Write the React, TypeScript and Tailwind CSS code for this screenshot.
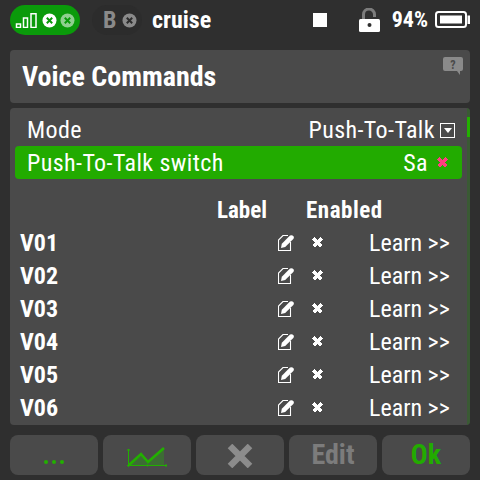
import React from "react";

const rows = ["V01", "V02", "V03", "V04", "V05", "V06"];

function XCircle({ className, mark }: { className: string; mark: string }) {
  return (
    <svg width="15" height="15" viewBox="0 0 15 15" className={className}>
      <circle cx="7.5" cy="7.5" r="7" fill="currentColor" />
      <path d="M4.8 4.8l5.4 5.4M10.2 4.8l-5.4 5.4" stroke={mark} strokeWidth="2" />
    </svg>
  );
}

function Signal() {
  return (
    <svg width="24" height="15" viewBox="0 0 24 15" fill="none" stroke="#fff" strokeWidth="1.5">
      <rect x="1.5" y="11" width="4" height="3.5" />
      <rect x="8.5" y="5" width="4" height="9.5" />
      <rect x="16" y="0.75" width="5" height="13.75" />
    </svg>
  );
}

function Lock() {
  return (
    <svg width="21" height="24" viewBox="0 0 21 24">
      <path d="M4.5 11V6.5a5.5 5.5 0 0 1 11 0V9" fill="none" stroke="#7c7c7c" strokeWidth="3" />
      <rect x="0" y="11" width="21" height="13" rx="1.5" fill="#fff" />
      <circle cx="10.5" cy="17" r="2" fill="#2f2f2f" />
    </svg>
  );
}

function Battery() {
  return (
    <svg width="35" height="18" viewBox="0 0 35 18">
      <rect x="1" y="1" width="30" height="15" rx="2.5" fill="none" stroke="#fff" strokeWidth="2" />
      <rect x="5" y="4.5" width="22" height="8" fill="#fff" />
      <rect x="32.5" y="4.5" width="2.5" height="8.5" fill="#fff" />
    </svg>
  );
}

function Help() {
  return (
    <svg width="20" height="18" viewBox="0 0 20 18">
      <path d="M2 0h16a2 2 0 0 1 2 2v10a2 2 0 0 1-2 2h-1v4l-3-4H2a2 2 0 0 1-2-2V2a2 2 0 0 1 2-2z" fill="#8a8a8a" />
      <text x="10" y="11.5" textAnchor="middle" fontSize="12" fontWeight="700" fontFamily="Roboto, sans-serif" fill="#4a4a4a">?</text>
    </svg>
  );
}

function Edit() {
  return (
    <svg width="16" height="16" viewBox="0 0 16 16">
      <path d="M10 0.5H5L0.5 5V15.5H12.5V7" fill="none" stroke="#fff" strokeWidth="1.1" />
      <path d="M3 13L3.8 8.8L12 0.6Q14 -0.3 15.7 1.4Q16.2 3 15.3 4L7.2 12z" fill="#fff" />
    </svg>
  );
}

function Cross({ color = "#fff" }: { color?: string }) {
  return (
    <svg width="11" height="11" viewBox="0 0 11 11" shapeRendering="crispEdges">
      <path d="M1.5 1.5l8 8M9.5 1.5l-8 8" stroke={color} strokeWidth="3.6" />
    </svg>
  );
}

function Chart() {
  return (
    <svg width="42" height="22" viewBox="0 0 42 22" className="mt-[4px]">
      <path d="M3 19L15 8L22 16L38 2V19z" fill="#3d6b35" />
      <path d="M3 19L15 8L22 16L38 2" fill="none" stroke="#22b000" strokeWidth="2.6" />
      <path d="M2.5 3V21M1 19.5H41M21.5 18.5v2M1 4h3M40 18v3" fill="none" stroke="#22b000" strokeWidth="1" />
    </svg>
  );
}

function FooterButton({ children }: { children: React.ReactNode }) {
  return (
    <div className="flex h-10 w-[88px] items-center justify-center rounded-[8px] bg-[#4a4a4a]">
      {children}
    </div>
  );
}

export default function App() {
  return (
    <div
      className="flex h-[480px] w-[480px] flex-col overflow-hidden bg-[#2f2f2f] px-[10px] text-white [font-stretch:condensed]"
      style={{ fontFamily: "Roboto, sans-serif" }}
    >
      {/* Top bar */}
      <div className="flex h-[50px] items-start pt-[5px]">
        <div className="flex h-[30px] w-[70px] items-center gap-[3px] rounded-full bg-[#0a9a0a] pl-[5px]">
          <Signal />
          <XCircle className="text-white" mark="#0a9a0a" />
          <XCircle className="text-[#8fcf8f]" mark="#0a9a0a" />
        </div>
        <div className="ml-[12px] flex h-[30px] w-[50px] items-center gap-[6px] rounded-full bg-[#2c2c2c] pl-[11px]">
          <span className="text-[24px] font-bold leading-none text-[#8a8a8a]">B</span>
          <XCircle className="text-[#8a8a8a]" mark="#2c2c2c" />
        </div>
        <span className="ml-[10px] mt-[3px] text-[24px] font-bold leading-none">cruise</span>
        <div className="ml-auto mt-[8px] h-[14px] w-[14px] bg-white" />
        <div className="ml-[32px] mt-[3px]">
          <Lock />
        </div>
        <span className="ml-[12px] mt-[4px] text-[22px] font-bold leading-none">94%</span>
        <div className="ml-[7px] mt-[6px]">
          <Battery />
        </div>
      </div>

      {/* Title */}
      <div className="relative flex h-[53px] items-center rounded-[4px] bg-[#4a4a4a] pl-[12px]">
        <span className="text-[28px] font-bold leading-none">Voice Commands</span>
        <div className="absolute right-[7px] top-[7px]">
          <Help />
        </div>
      </div>

      {/* Main panel */}
      <div className="relative mt-[5px] h-[317px] overflow-hidden rounded-[4px] bg-[#4a4a4a] pl-[5px] pr-[8px]">
        <div className="absolute bottom-0 right-0 top-0 w-[3px] bg-[#3a5a34]">
          <div className="mt-[9px] h-[20px] bg-[#22b000]" />
        </div>
        <div className="flex h-[38px] items-center pl-[12px] pr-[7px] pt-[6px] text-[24px] leading-none tracking-[0.4px]">
          <span>Mode</span>
          <span className="ml-auto">Push-To-Talk</span>
          <div className="ml-[5px] flex h-[15px] w-[15px] items-center justify-center border border-white">
            <div className="h-0 w-0 border-x-[4px] border-t-[5px] border-x-transparent border-t-white" />
          </div>
        </div>
        <div className="flex h-[33px] items-center rounded-[4px] bg-[#22ab00] pl-[12px] pr-[14px] text-[24px] leading-none tracking-[0.4px]">
          <span>Push-To-Talk switch</span>
          <span className="ml-auto">Sa</span>
          <div className="ml-[9px]">
            <Cross color="#ff3d80" />
          </div>
        </div>
        <div className="mt-[19px] flex h-[24px] items-center text-[23px] font-bold leading-none">
          <span className="ml-[202px]">Label</span>
          <span className="ml-[39px] tracking-[0.5px]">Enabled</span>
        </div>
        <div className="mt-[4px] flex flex-col">
          {rows.map((row) => (
            <div key={row} className="flex h-[33px] items-center">
              <span className="ml-[5px] w-[37px] text-[24px] font-bold leading-none">{row}</span>
              <div className="ml-[221px]">
                <Edit />
              </div>
              <div className="ml-[18px]">
                <Cross />
              </div>
              <span className="ml-[46px] text-[24px] leading-none">Learn &gt;&gt;</span>
            </div>
          ))}
        </div>
      </div>

      {/* Footer */}
      <div className="mt-[10px] flex gap-[5px]">
        <FooterButton>
          <div className="mt-[14px] flex gap-[4px]">
            <div className="h-1 w-1 rounded-full bg-[#22b000]" />
            <div className="h-1 w-1 rounded-full bg-[#22b000]" />
            <div className="h-1 w-1 rounded-full bg-[#22b000]" />
          </div>
        </FooterButton>
        <FooterButton>
          <Chart />
        </FooterButton>
        <FooterButton>
          <svg width="26" height="24" viewBox="0 0 26 24" className="mt-[2px]">
            <path d="M3 2l20 20M23 2L3 22" stroke="#8c8c8c" strokeWidth="6.5" />
          </svg>
        </FooterButton>
        <FooterButton>
          <span className="text-[28px] font-bold leading-none text-[#7c7c7c]">Edit</span>
        </FooterButton>
        <FooterButton>
          <span className="text-[28px] font-bold leading-none text-[#22ab00]">Ok</span>
        </FooterButton>
      </div>
    </div>
  );
}
